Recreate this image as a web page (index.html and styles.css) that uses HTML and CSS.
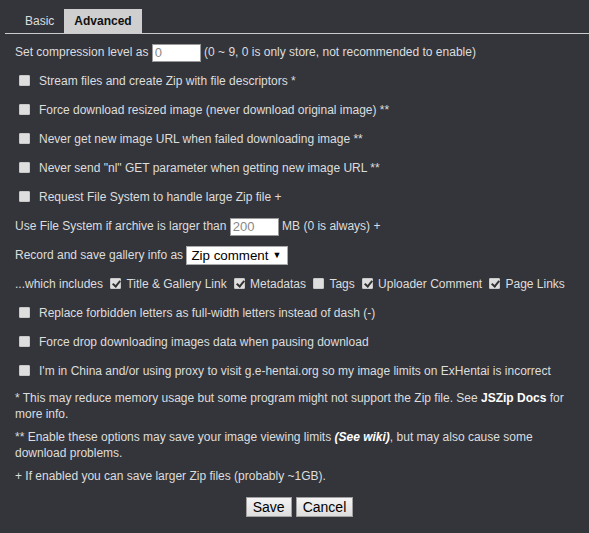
FILE: index.html
```html
<!DOCTYPE html>
<html>
<head>
<meta charset="utf-8">
<link rel="stylesheet" href="styles.css">
</head>
<body>
<div class="tabs">
  <span class="tab">Basic</span>
  <span class="tab active">Advanced</span>
</div>
<div class="content">
  <div class="rows">
    <div class="row">Set compression level as <input class="num" type="text" value="0"> (0 ~ 9, 0 is only store, not recommended to enable)</div>
    <label class="row opt"><input type="checkbox" class="cb">Stream files and create Zip with file descriptors *</label>
    <label class="row opt"><input type="checkbox" class="cb">Force download resized image (never download original image) **</label>
    <label class="row opt"><input type="checkbox" class="cb">Never get new image URL when failed downloading image **</label>
    <label class="row opt"><input type="checkbox" class="cb">Never send "nl" GET parameter when getting new image URL **</label>
    <label class="row opt"><input type="checkbox" class="cb">Request File System to handle large Zip file +</label>
    <div class="row">Use File System if archive is larger than <input class="num" type="text" value="200"> MB (0 is always) +</div>
    <div class="row">Record and save gallery info as <span class="sel"><select><option>Zip comment</option></select></span></div>
    <div class="row">...which includes <label class="inl"><input type="checkbox" class="cb" checked>Title &amp; Gallery Link</label> <label class="inl"><input type="checkbox" class="cb" checked>Metadatas</label> <label class="inl"><input type="checkbox" class="cb">Tags</label> <label class="inl"><input type="checkbox" class="cb" checked>Uploader Comment</label> <label class="inl"><input type="checkbox" class="cb" checked>Page Links</label></div>
    <label class="row opt"><input type="checkbox" class="cb">Replace forbidden letters as full-width letters instead of dash (-)</label>
    <label class="row opt"><input type="checkbox" class="cb">Force drop downloading images data when pausing download</label>
    <label class="row opt"><input type="checkbox" class="cb">I'm in China and/or using proxy to visit g.e-hentai.org so my image limits on ExHentai is incorrect</label>
  </div>
  <div class="notes">
    <p>* This may reduce memory usage but some program might not support the Zip file. See <b>JSZip Docs</b> for more info.</p>
    <p>** Enable these options may save your image viewing limits <b><i>(See wiki)</i></b>, but may also cause some download problems.</p>
    <p>+ If enabled you can save larger Zip files (probably ~1GB).</p>
  </div>
  <div class="buttons">
    <button class="btn">Save</button>
    <button class="btn">Cancel</button>
  </div>
</div>
</body>
</html>
```
FILE: styles.css
```css
html, body {
  margin: 0;
  padding: 0;
  background: #34353b;
}
body {
  font-family: "Liberation Sans", Arial, sans-serif;
  font-size: 12px;
  color: #dddddd;
  height: 533px;
  overflow: hidden;
}
.tabs {
  display: flex;
  margin-left: 5px;
  padding: 9px 0 0 10px;
  border-bottom: 1px solid #cccccc;
  height: 24px;
}
.tab {
  display: flex;
  align-items: center;
  padding: 0 10px;
  height: 24px;
  color: #dddddd;
}
.tab.active {
  background: #cfcfcf;
  color: #111111;
  font-weight: bold;
  padding: 0 10px 0 10px;
}
.content {
  padding: 8px 19px 0 15px;
}
.rows {
  display: flex;
  flex-direction: column;
  gap: 9px;
}
.row {
  display: block;
  height: 20px;
  line-height: 20px;
  white-space: nowrap;
}
.num {
  font-family: "Liberation Sans", Arial, sans-serif;
  font-size: 13px;
  width: 43px;
  height: 16px;
  padding: 0 2px;
  margin: 0;
  border: 1px solid #999999;
  background: #ffffff;
  color: #888888;
  box-sizing: content-box;
  vertical-align: middle;
}
.cb {
  appearance: none;
  -webkit-appearance: none;
  width: 11px;
  height: 11px;
  margin: 0 5px 0 4px;
  background: #dedede;
  border: 1px solid #c8c8c8;
  border-radius: 1px;
  position: relative;
  vertical-align: -1px;
}
.opt .cb {
  margin: 0 9px 0 4px;
}
.cb:checked::after {
  content: "";
  position: absolute;
  left: 3px;
  top: 0px;
  width: 3px;
  height: 6px;
  border: solid #333333;
  border-width: 0 2px 2px 0;
  transform: rotate(40deg);
}
.inl {
  display: inline;
}
.sel {
  position: relative;
  display: inline-block;
  vertical-align: middle;
  height: 19px;
  margin-left: 0;
}
.sel select {
  appearance: none;
  -webkit-appearance: none;
  display: block;
  font-family: "Liberation Sans", Arial, sans-serif;
  font-size: 13.33px;
  height: 19px;
  width: 102px;
  padding: 0 0 0 4px;
  margin: 0;
  border: 1px solid #aaaaaa;
  border-radius: 0;
  background: #ffffff;
  color: #000000;
}
.sel::after {
  content: "\25BC";
  position: absolute;
  right: 7px;
  top: 0;
  line-height: 19px;
  font-size: 9px;
  color: #000000;
  pointer-events: none;
}
.notes {
  margin-top: 9px;
  display: flex;
  flex-direction: column;
  gap: 7px;
}
.notes p {
  margin: 0;
  line-height: 16px;
}
.notes b {
  color: #ffffff;
}
.buttons {
  display: flex;
  justify-content: center;
  gap: 4px;
  margin-top: 13px;
  padding-left: 14px;
}
.btn {
  font-family: "Liberation Sans", Arial, sans-serif;
  font-size: 14px;
  height: 20px;
  padding: 0 6px;
  border: 1px solid #a0a0a0;
  border-radius: 0;
  background: linear-gradient(#f4f4f4, #dddddd);
  color: #000000;
}
```
